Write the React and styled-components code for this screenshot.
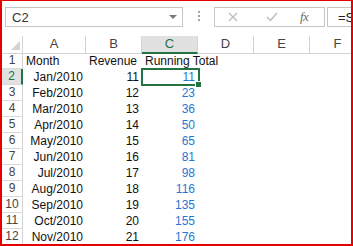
import React from 'react';
import styled, { createGlobalStyle } from 'styled-components';

const GlobalStyle = createGlobalStyle`
  html, body {
    margin: 0;
    padding: 0;
    background: #fff;
  }
  body {
    font-family: 'Liberation Sans', Arial, sans-serif;
  }
`;

const Frame = styled.div`
  width: 353px;
  height: 246px;
  box-sizing: border-box;
  border: 2px solid #e60000;
  border-top-width: 1px;
  overflow: hidden;
  background: #fff;
  display: flex;
  flex-direction: column;
`;

const FormulaBar = styled.div`
  display: flex;
  align-items: flex-start;
  height: 35px;
  padding: 6px 0 0 3px;
  box-sizing: border-box;
  flex-shrink: 0;
`;

const NameBox = styled.div`
  width: 178px;
  height: 20px;
  box-sizing: border-box;
  border: 1px solid #c6c6c6;
  display: flex;
  align-items: center;
  justify-content: space-between;
  padding: 0 5px 0 6px;
  font-size: 13px;
  color: #333;
  flex-shrink: 0;
`;

const DropArrow = styled.span`
  width: 0;
  height: 0;
  border-left: 4px solid transparent;
  border-right: 4px solid transparent;
  border-top: 4px solid #7a7a7a;
`;

const Grip = styled.div`
  display: flex;
  flex-direction: column;
  gap: 2px;
  margin: 4px 14px 0 15px;
  flex-shrink: 0;

  span {
    width: 2px;
    height: 2px;
    background: #a6a6a6;
  }
`;

const ActionBox = styled.div`
  width: 111px;
  height: 20px;
  box-sizing: border-box;
  border: 1px solid #c6c6c6;
  display: flex;
  align-items: center;
  flex-shrink: 0;
`;

const ActionIcon = styled.span`
  width: ${p => p.w}px;
  margin-left: ${p => p.ml}px;
  display: flex;
  align-items: center;
  justify-content: center;
`;

const Fx = styled.span`
  margin-left: ${p => p.ml}px;
  font-family: 'Liberation Serif', 'Times New Roman', serif;
  font-style: italic;
  font-size: 13px;
  color: #6b6b6b;
  letter-spacing: -0.5px;
`;

const FormulaInput = styled.div`
  height: 20px;
  margin-left: 2px;
  flex: 1;
  min-width: 40px;
  box-sizing: border-box;
  border: 1px solid #c6c6c6;
  border-right: none;
  display: flex;
  align-items: center;
  padding-left: 10px;
  font-size: 13px;
  color: #222;
  white-space: nowrap;
  overflow: hidden;
`;

const Sheet = styled.div`
  display: flex;
  flex-direction: column;
`;

const Row = styled.div`
  display: grid;
  grid-template-columns: 21px 63px 56px 56px 56px 56px 56px;
  height: ${p => (p.head ? 17 : 16)}px;
  font-size: 12px;
  line-height: 16px;
`;

const ColHead = styled.div`
  box-sizing: border-box;
  border-bottom: ${p => (p.active ? '2px solid #217346' : '1px solid #d4d4d4')};
  border-right: 1px solid #d4d4d4;
  background: ${p => (p.active ? '#e1e1e1' : '#fff')};
  color: ${p => (p.active ? '#217346' : '#444')};
  font-size: 13px;
  text-align: center;
  line-height: 16px;
  position: relative;
`;

const Corner = styled(ColHead)`
  display: flex;
  align-items: flex-end;
  justify-content: flex-end;
  padding: 0 2px 3px 0;
`;

const RowHead = styled.div`
  box-sizing: border-box;
  border-bottom: 1px solid #d9d9d9;
  border-right: ${p => (p.active ? '2px solid #217346' : '1px solid #d4d4d4')};
  background: ${p => (p.active ? '#e1e1e1' : '#fff')};
  color: ${p => (p.active ? '#217346' : '#444')};
  font-size: 12px;
  text-align: center;
  line-height: 15px;
`;

const Cell = styled.div`
  padding: 0 3px;
  text-align: ${p => (p.right ? 'right' : 'left')};
  color: ${p => (p.blue ? '#1f77d6' : '#111')};
  white-space: nowrap;
  position: relative;
  overflow: visible;
  z-index: ${p => (p.selected ? 2 : 1)};
`;

const Selection = styled.span`
  position: absolute;
  left: -1px;
  top: -1px;
  right: -2px;
  bottom: -1px;
  border: 2px solid #217346;
  pointer-events: none;

  &::after {
    content: '';
    position: absolute;
    right: -4px;
    bottom: -4px;
    width: 5px;
    height: 5px;
    background: #217346;
    border: 1px solid #fff;
  }
`;

const months = ['Jan', 'Feb', 'Mar', 'Apr', 'May', 'Jun', 'Jul', 'Aug', 'Sep', 'Oct', 'Nov'];

const data = months.map((m, i) => ({ month: `${m}/2010`, revenue: 11 + i }));
let sum = 0;
data.forEach(d => {
  sum += d.revenue;
  d.total = sum;
});

const columns = ['A', 'B', 'C', 'D', 'E', 'F'];

export default function App() {
  return (
    <>
      <GlobalStyle />
      <Frame>
        <FormulaBar>
          <NameBox>
            <span>C2</span>
            <DropArrow />
          </NameBox>
          <Grip>
            <span />
            <span />
            <span />
          </Grip>
          <ActionBox>
            <ActionIcon w={10} ml={13}>
              <svg width="10" height="10" viewBox="0 0 10 10">
                <path d="M1 1 L9 9 M9 1 L1 9" stroke="#bdbdbd" strokeWidth="1.4" fill="none" />
              </svg>
            </ActionIcon>
            <ActionIcon w={12} ml={28}>
              <svg width="12" height="10" viewBox="0 0 12 10">
                <path d="M1 5 L4.5 8.5 L11 1" stroke="#bdbdbd" strokeWidth="1.5" fill="none" />
              </svg>
            </ActionIcon>
            <Fx ml={22}>fx</Fx>
          </ActionBox>
          <FormulaInput>=SUM(</FormulaInput>
        </FormulaBar>
        <Sheet>
          <Row head>
            <Corner>
              <svg width="9" height="9" viewBox="0 0 9 9">
                <polygon points="9,0 9,9 0,9" fill="#d2d2d2" />
              </svg>
            </Corner>
            {columns.map(c => (
              <ColHead key={c} active={c === 'C'}>{c}</ColHead>
            ))}
          </Row>
          <Row>
            <RowHead>1</RowHead>
            <Cell>Month</Cell>
            <Cell>Revenue</Cell>
            <Cell>Running Total</Cell>
            <Cell />
            <Cell />
            <Cell />
          </Row>
          {data.map((d, i) => (
            <Row key={d.month}>
              <RowHead active={i === 0}>{i + 2}</RowHead>
              <Cell right>{d.month}</Cell>
              <Cell right>{d.revenue}</Cell>
              <Cell right blue selected={i === 0}>
                {d.total}
                {i === 0 && <Selection />}
              </Cell>
              <Cell />
              <Cell />
              <Cell />
            </Row>
          ))}
        </Sheet>
      </Frame>
    </>
  );
}
